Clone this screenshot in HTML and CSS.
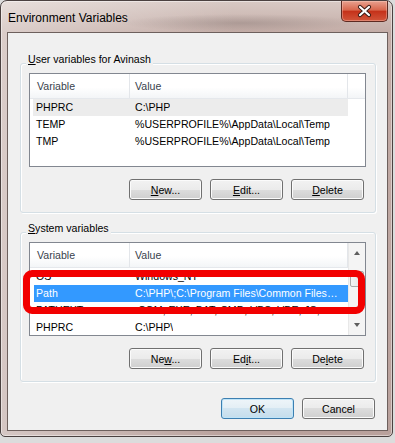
FILE: index.html
```html
<!DOCTYPE html>
<html lang="en">
<head>
  <meta charset="UTF-8">
  <meta name="viewport" content="width=device-width, initial-scale=1.0">
  <title>Environment Variables</title>
  <link rel="stylesheet" href="styles.css">
</head>
<body>
  <div class="window">
    <div class="titlebar">
      <span class="title">Environment Variables</span>
      <div class="close">
        <svg width="45" height="20" viewBox="0 0 45 20">
          <path d="M18 6 L27 14 M27 6 L18 14" stroke="#3b1c16" stroke-width="4.2" stroke-linecap="round"/>
          <path d="M18 6 L27 14 M27 6 L18 14" stroke="#ffffff" stroke-width="2.2" stroke-linecap="round"/>
        </svg>
      </div>
    </div>

    <div class="client">
      <div class="group first">
        <span class="groupLabel"><u>U</u>ser variables for Avinash</span>
        <div class="list">
          <div class="listMain">
            <div class="listHead">
              <span class="hName">Variable</span>
              <span class="hValue">Value</span>
              <span class="hFill"></span>
            </div>
            <div class="row soft"><span class="cName">PHPRC</span><span class="cValue">C:\PHP</span></div>
            <div class="row"><span class="cName">TEMP</span><span class="cValue">%USERPROFILE%\AppData\Local\Temp</span></div>
            <div class="row"><span class="cName">TMP</span><span class="cValue">%USERPROFILE%\AppData\Local\Temp</span></div>
          </div>
        </div>
        <div class="btns">
          <button class="btn"><u>N</u>ew...</button>
          <button class="btn"><u>E</u>dit...</button>
          <button class="btn"><u>D</u>elete</button>
        </div>
      </div>

      <div class="group second">
        <span class="groupLabel"><u>S</u>ystem variables</span>
        <div class="list">
          <div class="listMain">
            <div class="listHead">
              <span class="hName">Variable</span>
              <span class="hValue">Value</span>
            </div>
            <div class="row"><span class="cName">OS</span><span class="cValue">Windows_NT</span></div>
            <div class="row selected"><span class="cName">Path</span><span class="cValue">C:\PHP\;C:\Program Files\Common Files…</span></div>
            <div class="row"><span class="cName">PATHEXT</span><span class="cValue">.COM;.EXE;.BAT;.CMD;.VBS;.VBE;.JS;...</span></div>
            <div class="row"><span class="cName">PHPRC</span><span class="cValue">C:\PHP\</span></div>
          </div>
          <div class="scroll">
            <div class="arrow up"></div>
            <div class="track"><div class="thumb"></div></div>
            <div class="arrow down"></div>
          </div>
          <div class="mark"></div>
        </div>
        <div class="btns">
          <button class="btn">Ne<u>w</u>...</button>
          <button class="btn">Ed<u>i</u>t...</button>
          <button class="btn">De<u>l</u>ete</button>
        </div>
      </div>

      <div class="dialogBtns">
        <button class="btn default">OK</button>
        <button class="btn">Cancel</button>
      </div>
    </div>
  </div>
</body>
</html>
```

FILE: styles.css
```css
* {
  box-sizing: border-box;
}

body {
  margin: 0;
  background-color: #dcdcdc;
  font-family: "Liberation Sans", Arial, sans-serif;
  font-size: 10.6px;
  color: #000;
}

.window {
  width: 393px;
  height: 437px;
  border: 1px solid #4b4140;
  border-radius: 7px 7px 5px 5px;
  padding: 0 4px 5px 6px;
  display: flex;
  flex-direction: column;
  background:
    radial-gradient(ellipse 120px 9px at 240px 22px, rgba(120, 105, 102, 0.35), transparent),
    linear-gradient(to right, rgba(255, 255, 255, 0.4), rgba(255, 255, 255, 0) 60%),
    linear-gradient(to bottom, #d8c9c4 0, #c3aca6 32px, #b9a19c 100%);
  box-shadow: inset 0 0 0 1px rgba(255, 255, 255, 0.45);
}

.titlebar {
  height: 31px;
  display: flex;
  align-items: flex-start;
}

.title {
  margin-top: 9px;
  padding-left: 1px;
  line-height: 16px;
  font-size: 12px;
}

.close {
  margin-left: auto;
  width: 47px;
  height: 21px;
  border: 1px solid #5d2a21;
  border-top: none;
  border-radius: 0 0 5px 5px;
  background: linear-gradient(#e8a18f 0, #d8674d 45%, #c5321a 52%, #d2553a 100%);
  box-shadow: inset 0 0 0 1px rgba(255, 220, 210, 0.35);
}

.close svg {
  display: block;
}

.client {
  flex: 1;
  background-color: #f0f0f0;
  border: 1px solid #6d605d;
  padding: 0 11px 0 12px;
  display: flex;
  flex-direction: column;
}

.group {
  border: 1px solid #d5dfe5;
  border-radius: 3px;
  padding: 0 9px 12px 8px;
  display: flex;
  flex-direction: column;
  box-shadow: inset 1px 1px 0 #fff, 1px 1px 0 #fff;
}

.group.first {
  margin-top: 30px;
}

.group.second {
  margin-top: 19px;
}

.groupLabel {
  align-self: flex-start;
  margin: -12px 0 0 -3px;
  padding: 0 2px;
  line-height: 14px;
  background-color: #f0f0f0;
}

.list {
  position: relative;
  margin-top: 7px;
  height: 94px;
  border: 1px solid #828790;
  background-color: #fff;
  display: flex;
}

.listMain {
  flex: 1;
  overflow: hidden;
}

.listHead {
  display: flex;
  height: 25px;
  line-height: 24px;
  border-bottom: 1px solid #e5e8ec;
  background: linear-gradient(#ffffff 0, #ffffff 55%, #f3f5f7 100%);
  color: #39424c;
}

.hName {
  width: 100px;
  padding-left: 7px;
  border-right: 1px solid #e3e6ea;
}

.hValue {
  width: 218px;
  padding-left: 5px;
  border-right: 1px solid #e3e6ea;
}

.hFill {
  flex: 1;
}

.row {
  display: flex;
  height: 17px;
  line-height: 17px;
  white-space: nowrap;
}

.row.soft {
  background: linear-gradient(to right, transparent 3px, #ececec 3px);
  width: 318px;
}

.row.selected {
  background: linear-gradient(to right, transparent 4px, #3399ff 4px);
  color: #fff;
}

.cName {
  width: 100px;
  padding-left: 6px;
}

.cValue {
  padding-left: 5px;
  overflow: hidden;
}

.scroll {
  width: 17px;
  background-color: #f4f4f4;
  border-left: 1px solid #e8e8e8;
  display: flex;
  flex-direction: column;
}

.arrow {
  height: 17px;
  display: flex;
  align-items: center;
  justify-content: center;
}

.arrow::after {
  content: "";
  border-left: 3.5px solid transparent;
  border-right: 3.5px solid transparent;
}

.arrow.up::after {
  border-bottom: 4px solid #5e5e5e;
  margin-top: 3px;
}

.arrow.down::after {
  border-top: 4px solid #5e5e5e;
  margin-top: -3px;
}

.track {
  flex: 1;
}

.thumb {
  margin: 11px 1px 0 1px;
  height: 16px;
  border: 1px solid #a8a8a8;
  border-radius: 2px;
  background: linear-gradient(to right, #f3f3f3, #e2e2e2);
}

.mark {
  position: absolute;
  left: -7px;
  top: 27px;
  width: 342px;
  height: 44px;
  border: 7px solid #f20000;
  border-radius: 9px;
}

.btns {
  display: flex;
  justify-content: flex-end;
  gap: 8px;
  margin-top: 12px;
  margin-right: 2px;
}

.btn {
  width: 73px;
  height: 21px;
  padding: 0;
  font-family: "Liberation Sans", Arial, sans-serif;
  font-size: 10.6px;
  line-height: 18px;
  color: #000;
  border: 1px solid #707070;
  border-radius: 3px;
  background: linear-gradient(#f2f2f2 0, #ebebeb 50%, #dddddd 50%, #cfcfcf 100%);
  box-shadow: inset 0 0 0 1px #fbfbfb;
}

.btn.default {
  border-color: #3c7fb1;
  background: linear-gradient(#eef5f9 0, #e3eef5 50%, #d2e5f1 50%, #c4ddec 100%);
  box-shadow: inset 0 0 0 1px #bfe4f8;
}

.dialogBtns {
  display: flex;
  justify-content: flex-end;
  gap: 8px;
  margin-top: 16px;
  margin-right: 1px;
}
```
